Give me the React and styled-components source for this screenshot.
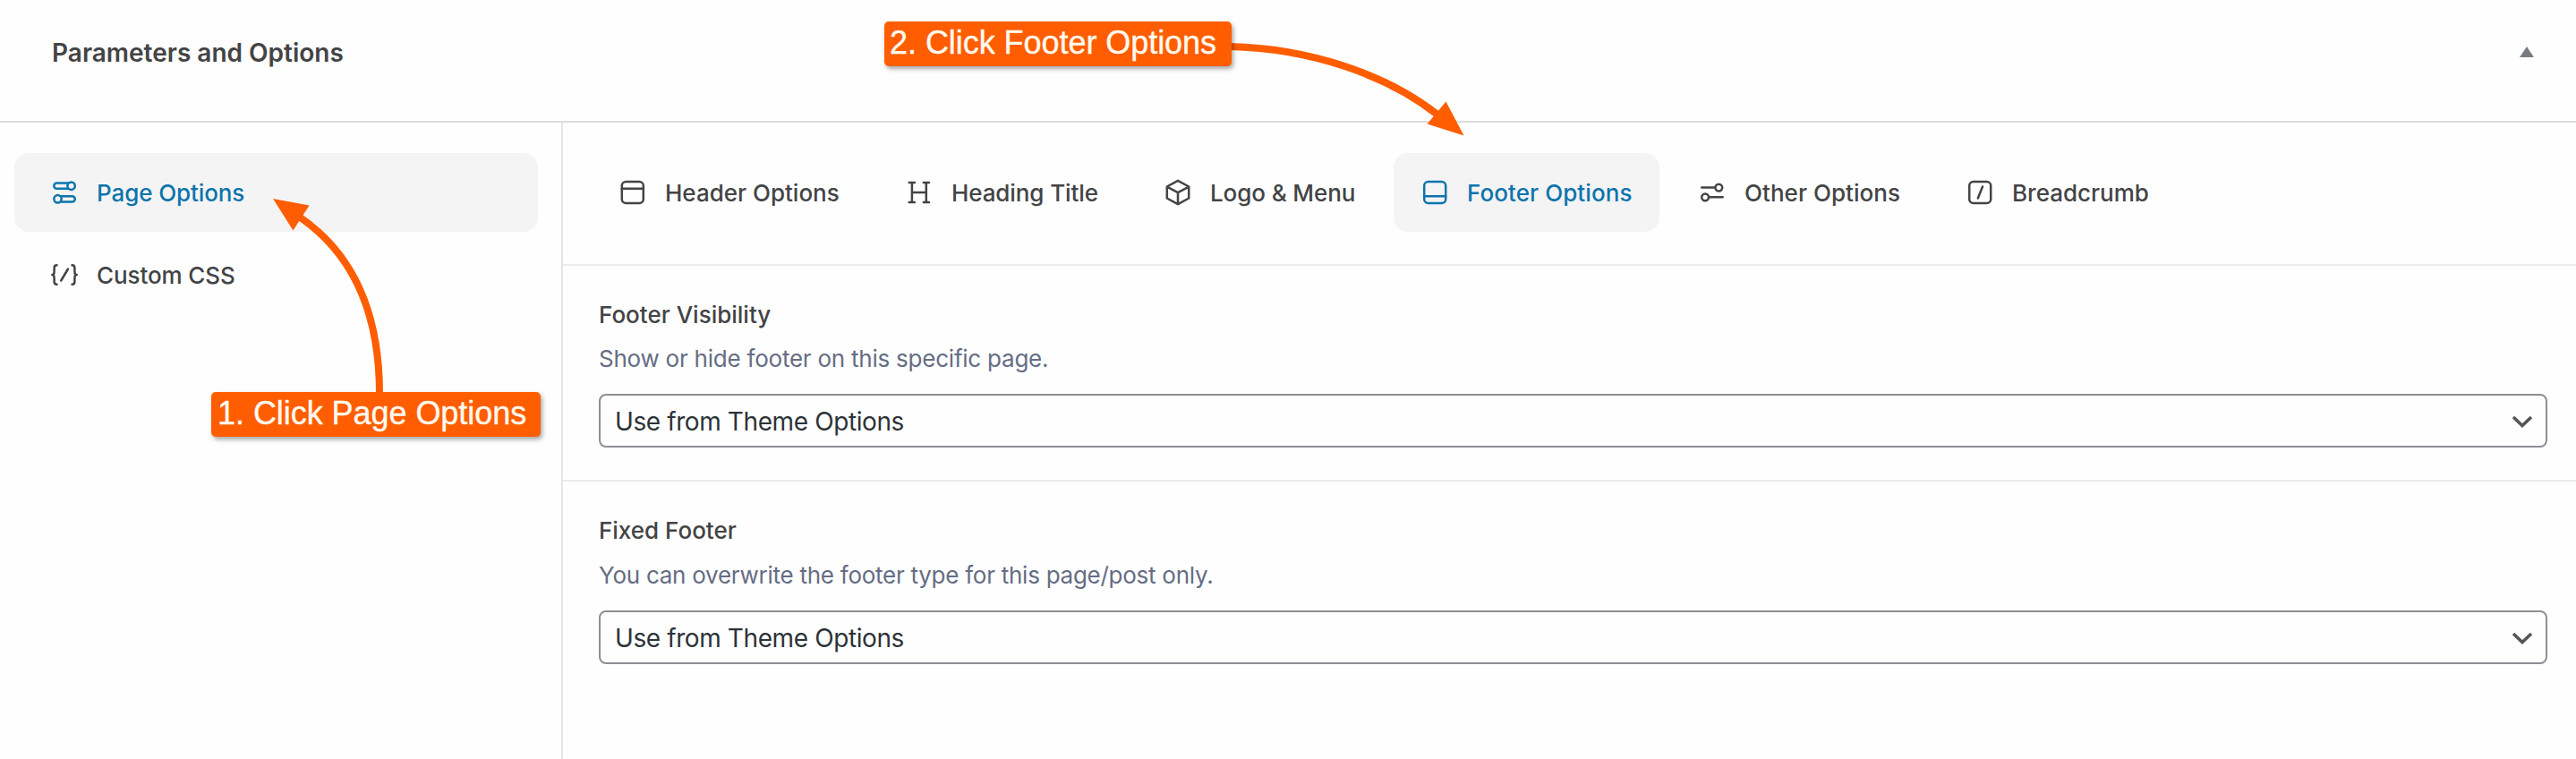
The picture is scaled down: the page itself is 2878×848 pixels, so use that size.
import React from "react";
import styled, { createGlobalStyle } from "styled-components";

const Global = createGlobalStyle`
  * { box-sizing: border-box; }
  body { margin: 0; background: #fefefe; font-family: Inter, "Liberation Sans", sans-serif; color: #434445; }
`;

const Page = styled.div`
  position: relative;
  display: flex;
  flex-direction: column;
  height: 848px;
  overflow: hidden;
`;

const Header = styled.header`
  display: flex;
  align-items: center;
  justify-content: space-between;
  height: 137px;
  padding: 0 47px 18px 58px;
  border-bottom: 2px solid #dcdcdd;
`;

const Title = styled.h1`
  margin: 0;
  font-size: 28px;
  font-weight: 600;
  line-height: 36px;
`;

const Toggle = styled.svg`
  width: 16px;
  height: 12px;
  margin-top: -2px;
  fill: #787c82;
`;

const Body = styled.div`
  display: flex;
  flex: 1;
`;

const Sidebar = styled.nav`
  display: flex;
  flex-direction: column;
  gap: 4px;
  width: 629px;
  padding: 34px 26px 0 16px;
  border-right: 2px solid #e4e6e8;
`;

const NavItem = styled.a`
  display: flex;
  align-items: center;
  gap: 20px;
  height: 88px;
  width: ${(p) => (p.$width ? `${p.$width}px` : "auto")};
  padding-left: ${(p) => p.$inset || 40}px;
  border-radius: 16px;
  background: ${(p) => (p.$active ? "#f4f4f4" : "transparent")};
  color: ${(p) => (p.$active ? "#0c74ad" : "#434445")};
  font-size: 26px;
  font-weight: 500;
  white-space: nowrap;
  letter-spacing: ${(p) => p.$track || 0}px;
`;

const Icon = styled.svg`
  flex: none;
  width: 32px;
  height: 32px;
  fill: none;
  stroke: currentColor;
  stroke-width: 2.5;
  stroke-linecap: round;
  stroke-linejoin: round;
`;

const Main = styled.main`
  flex: 1;
`;

const Tabs = styled.div`
  display: flex;
  height: 160px;
  padding: 34px 0 0 32px;
  border-bottom: 2px solid #e9ebee;
`;

const TabSlot = styled.div`
  width: ${(p) => p.$width}px;
`;

const Section = styled.section`
  display: flex;
  flex-direction: column;
  height: ${(p) => p.$height}px;
  padding: 35px 32px 0 40px;
  border-bottom: ${(p) => (p.$last ? "none" : "2px solid #e9ebec")};
`;

const Label = styled.h2`
  margin: 0;
  font-size: 26px;
  font-weight: 500;
  line-height: 40px;
`;

const Hint = styled.p`
  margin: ${(p) => p.$gap}px 0 19px;
  color: #656d84;
  font-size: 26px;
  line-height: 40px;
  letter-spacing: ${(p) => p.$track}px;
`;

const Select = styled.div`
  display: flex;
  align-items: center;
  justify-content: space-between;
  height: 60px;
  padding: 1px 14px 0 16px;
  border: 2px solid #8c8f94;
  border-radius: 8px;
  color: #2c3338;
  background: #fefefe;
  font-size: 28px;
  letter-spacing: -0.4px;
`;

const Chevron = styled.svg`
  width: 24px;
  height: 16px;
  fill: none;
  stroke: #555;
  stroke-width: 3.6;
`;

const Callout = styled.div`
  position: absolute;
  left: ${(p) => p.$x}px;
  top: ${(p) => p.$y}px;
  width: ${(p) => p.$width}px;
  height: 50px;
  padding-left: ${(p) => p.$inset}px;
  border-radius: 5px;
  background: #ff5d00;
  box-shadow: 2px 3px 5px rgba(0, 0, 0, 0.35);
  color: #fff9ee;
  font-family: "Liberation Sans", Arial, sans-serif;
  font-size: 36px;
  line-height: 48px;
  white-space: nowrap;
  letter-spacing: -0.05px;
  -webkit-text-stroke: 0.4px #fff9ee;
`;

const Arrows = styled.svg`
  position: absolute;
  left: 0;
  top: 0;
  pointer-events: none;
  fill: #ff5d00;

  .shaft {
    fill: none;
    stroke: #ff5d00;
    stroke-width: 8;
  }
`;

const icons = {
  page: (
    <>
      <path d="M19.800 5.500H7.400a3.100 3.100 0 0 0 0 6.200H19.800" />
      <circle cx="23.600" cy="8.700" r="4.200" />
      <path d="M12.600 20.200H24.700a3.100 3.100 0 0 1 0 6.200H12.600" />
      <circle cx="8.500" cy="23.300" r="4.200" />
    </>
  ),
  css: (
    <>
      <path d="M7.500 5.300C5 5.300 4.600 6.300 4.600 8.300v4.200C4.600 15 4 16 2.300 16c1.700 0 2.300 1 2.300 3.500v4.200c0 2 .4 3 2.900 3" />
      <path d="M24.500 5.300c2.500 0 2.900 1 2.900 3v4.200c0 2.500.6 3.500 2.300 3.500-1.700 0-2.300 1-2.300 3.500v4.200c0 2-.4 3-2.900 3" />
      <path d="M20 9.500l-7.800 13" />
    </>
  ),
  header: (
    <>
      <rect x="3.800" y="4" width="24" height="24" rx="4.500" />
      <path d="M3.800 11.700h24" />
    </>
  ),
  heading: (
    <path d="M4.700 5h6.200M20.800 5H27M4.700 27h6.200M20.800 27H27M7.900 5v22M23.800 5v22M7.900 16h15.900" />
  ),
  cube: (
    <>
      <path d="M16 2.800l12.200 6.700v13L16 29.200 3.800 22.500v-13z" />
      <path d="M4.200 9.900L16 16.200l11.800-6.300M16 16.200v12.600" />
    </>
  ),
  footer: (
    <>
      <rect x="4.200" y="4" width="24" height="24" rx="4.500" />
      <path d="M4.200 20.300h24" />
    </>
  ),
  sliders: (
    <>
      <path d="M4.200 10.600h14.800M12.500 21.300h15.200" />
      <circle cx="23.300" cy="10.600" r="3.900" />
      <circle cx="8.100" cy="21.300" r="3.900" />
    </>
  ),
  slash: (
    <>
      <rect x="4.200" y="4" width="24" height="24" rx="4.500" />
      <path d="M19 9.500l-5.200 13" />
    </>
  ),
};

const tabs = [
  { icon: "header", text: "Header Options", width: 320 },
  { icon: "heading", text: "Heading Title", width: 289, track: -0.1 },
  { icon: "cube", text: "Logo & Menu", width: 287, track: -0.1 },
  { icon: "footer", text: "Footer Options", width: 310, track: 0.08, active: true },
  { icon: "sliders", text: "Other Options", width: 299, track: 0.05 },
  { icon: "slash", text: "Breadcrumb", width: 260 },
];

const Glyph = ({ name }) => (
  <Icon viewBox="0 0 32 32" aria-hidden="true">
    {icons[name]}
  </Icon>
);

const Dropdown = ({ value }) => (
  <Select>
    {value}
    <Chevron viewBox="0 0 24 16" aria-hidden="true">
      <path d="M2 3l10 9.500L22 3" />
    </Chevron>
  </Select>
);

export default function App() {
  return (
    <Page>
      <Global />
      <Header>
        <Title>Parameters and Options</Title>
        <Toggle viewBox="0 0 16 12">
          <path d="M8 0l8 12H0z" />
        </Toggle>
      </Header>
      <Body>
        <Sidebar>
          <NavItem $active $track={-0.1}>
            <Glyph name="page" />
            Page Options
          </NavItem>
          <NavItem $track={-0.1}>
            <Glyph name="css" />
            Custom CSS
          </NavItem>
        </Sidebar>
        <Main>
          <Tabs>
            {tabs.map((t) => (
              <TabSlot key={t.icon} $width={t.width}>
                <NavItem $active={t.active} $track={t.track} $inset={30} $width={297}>
                  <Glyph name={t.icon} />
                  {t.text}
                </NavItem>
              </TabSlot>
            ))}
          </Tabs>
          <Section $height={241}>
            <Label>Footer Visibility</Label>
            <Hint $gap={9} $track={-0.23}>Show or hide footer on this specific page.</Hint>
            <Dropdown value="Use from Theme Options" />
          </Section>
          <Section $height={250} $last>
            <Label>Fixed Footer</Label>
            <Hint $gap={10} $track={-0.26}>You can overwrite the footer type for this page/post only.</Hint>
            <Dropdown value="Use from Theme Options" />
          </Section>
        </Main>
      </Body>
      <Arrows width="2878" height="848" aria-hidden="true">
        <path className="shaft" d="M424 440C424 352 396 284 334 242" />
        <path d="M305 222l40.500 7.500-18 28z" />
        <path className="shaft" d="M1374 52C1465 54 1550 84 1606 128" />
        <path d="M1635.500 151.500l-20-38-21 25z" />
      </Arrows>
      <Callout $x={236} $y={438} $width={368} $inset={7}>1. Click Page Options</Callout>
      <Callout $x={988} $y={24} $width={388} $inset={6}>2. Click Footer Options</Callout>
    </Page>
  );
}
